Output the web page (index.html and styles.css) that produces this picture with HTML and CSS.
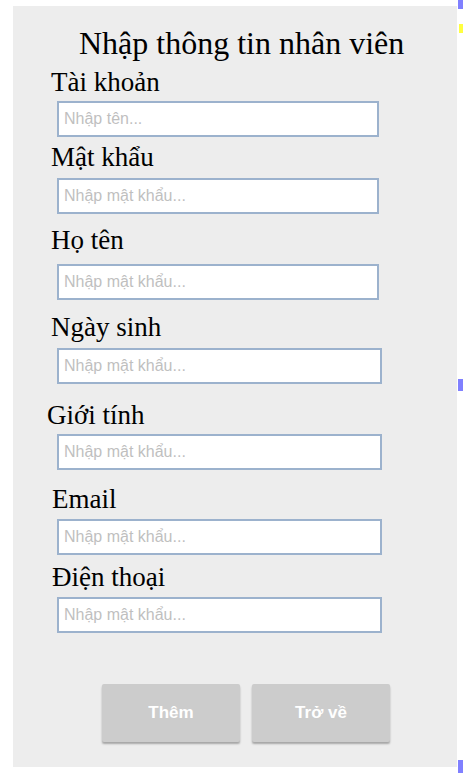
FILE: index.html
```html
<!DOCTYPE html>
<html lang="vi">
<head>
<meta charset="utf-8">
<title>Nhập thông tin nhân viên</title>
<link rel="stylesheet" href="styles.css">
</head>
<body>
<div class="panel">
  <h1 class="title">Nhập thông tin nhân viên</h1>
  <div class="field f-account">
    <label class="label">Tài khoản</label>
    <input class="input" type="text" placeholder="Nhập tên...">
  </div>
  <div class="field f-password">
    <label class="label">Mật khẩu</label>
    <input class="input" type="text" placeholder="Nhập mật khẩu...">
  </div>
  <div class="field f-name">
    <label class="label">Họ tên</label>
    <input class="input" type="text" placeholder="Nhập mật khẩu...">
  </div>
  <div class="field f-dob">
    <label class="label">Ngày sinh</label>
    <input class="input input--wide" type="text" placeholder="Nhập mật khẩu...">
  </div>
  <div class="field f-gender">
    <label class="label">Giới tính</label>
    <input class="input input--wide" type="text" placeholder="Nhập mật khẩu...">
  </div>
  <div class="field f-email">
    <label class="label">Email</label>
    <input class="input input--wide" type="text" placeholder="Nhập mật khẩu...">
  </div>
  <div class="field f-phone">
    <label class="label">Điện thoại</label>
    <input class="input input--wide" type="text" placeholder="Nhập mật khẩu...">
  </div>
  <div class="actions">
    <button class="btn" type="button">Thêm</button>
    <button class="btn" type="button">Trở về</button>
  </div>
</div>
<div class="markers">
  <span class="mark mark--blue mark-1"></span>
  <span class="mark mark--yellow mark-2"></span>
  <span class="mark mark--blue mark-3"></span>
  <span class="mark mark--blue mark-4"></span>
</div>
</body>
</html>
```
FILE: styles.css
```css
html, body {
  margin: 0;
  padding: 0;
  background: #ffffff;
  overflow: hidden;
}

body {
  font-family: "Liberation Serif", "Times New Roman", serif;
  color: #000;
}

.panel {
  box-sizing: border-box;
  width: 444px;
  height: 761px;
  margin: 6px 0 0 13px;
  padding-top: 19px;
  background: #ededed;
}

.title {
  margin: 0;
  padding-left: 66px;
  font-size: 32px;
  font-weight: normal;
  line-height: 37px;
}

.field {
  display: flex;
  flex-direction: column;
  align-items: flex-start;
}

.label {
  display: block;
  padding-left: 38px;
  font-size: 27px;
  line-height: 30px;
}

.input {
  box-sizing: border-box;
  width: 322px;
  height: 36px;
  margin-left: 44px;
  padding: 0 5px;
  border: 2px solid #9cb2cd;
  background: #fff;
  font-family: "Liberation Sans", Arial, sans-serif;
  font-size: 16px;
  outline: none;
}

.input::placeholder {
  color: #bfbfbf;
}

.input--wide {
  width: 325px;
}

.f-account { margin-top: 5px; }
.f-account .input { margin-top: 4px; }

.f-password { margin-top: 5px; }
.f-password .input { margin-top: 6px; }

.f-name { margin-top: 11px; }
.f-name .input { margin-top: 9px; }

.f-dob { margin-top: 12px; }
.f-dob .input { margin-top: 6px; }

.f-gender { margin-top: 16px; }
.f-gender .label { padding-left: 34px; }
.f-gender .input { margin-top: 4px; }

.f-email { margin-top: 14px; }
.f-email .label { padding-left: 39px; }
.f-email .input { margin-top: 5px; }

.f-phone { margin-top: 7px; }
.f-phone .label { padding-left: 39px; }
.f-phone .input { margin-top: 5px; }

.actions {
  display: flex;
  gap: 12px;
  margin-top: 51px;
  padding-left: 89px;
}

.btn {
  width: 138px;
  height: 58px;
  border: none;
  border-radius: 2px;
  background: #cccccc;
  color: #ffffff;
  font-family: "Liberation Sans", Arial, sans-serif;
  font-weight: bold;
  font-size: 17px;
  box-shadow: 0 2px 2px rgba(0, 0, 0, 0.3);
  padding: 0;
}

.markers {
  position: absolute;
  top: 0;
  right: 0;
  width: 5px;
  height: 775px;
}

.mark {
  position: absolute;
  right: 0;
  width: 5px;
}

.mark--blue { background: #8080ff; }
.mark--yellow { background: #ffff40; width: 4px; }

.mark-1 { top: 0; height: 9px; }
.mark-2 { top: 24px; height: 9px; }
.mark-3 { top: 379px; height: 12px; }
.mark-4 { top: 760px; height: 13px; }
```
